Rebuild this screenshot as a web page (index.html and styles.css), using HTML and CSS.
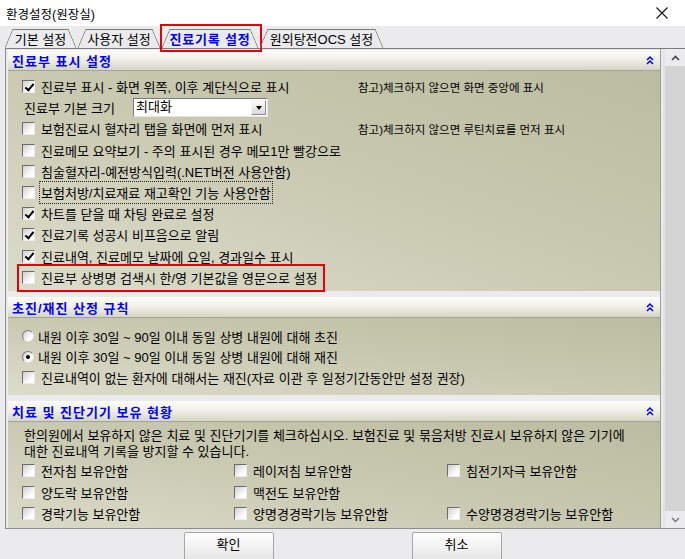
FILE: index.html
```html
<!DOCTYPE html>
<html lang="ko">
<head>
    <meta charset="UTF-8">
    <title>환경설정(원장실)</title>
    <link rel="stylesheet" href="styles.css">
</head>
<body>
<div class="window">
    <div class="titlebar">
        <span class="title">환경설정(원장실)</span>
        <svg class="close" width="12" height="12" viewBox="0 0 12 12"><path d="M0.5 0.5 L11.5 11.5 M11.5 0.5 L0.5 11.5" stroke="#111" stroke-width="1.1"/></svg>
    </div>

    <div class="tabs">
        <div class="tab t1">기본 설정</div>
        <div class="tab t2">사용자 설정</div>
        <div class="tab t3 active">진료기록 설정</div>
        <div class="tab t4">원외탕전OCS 설정</div>
    </div>

    <div class="panel">
        <div class="sections">
            <!-- 진료부 표시 설정 -->
            <div class="sec-head">
                <span>진료부 표시 설정</span>
                <svg width="8" height="10" viewBox="0 0 8 10"><path d="M1 5 L4 2 L7 5 M1 9 L4 6 L7 9" stroke="#0000ff" stroke-width="1.5" fill="none"/></svg>
            </div>
            <div class="sec-body s1">
                <div class="row"><span class="cb on"></span><span class="main">진료부 표시 - 화면 위쪽, 이후 계단식으로 표시</span><span class="note">참고)체크하지 않으면 화면 중앙에 표시</span></div>
                <div class="row size-row">
                    <span class="size-label">진료부 기본 크기</span>
                    <div class="select"><span class="val">최대화</span><span class="arrow"><i></i></span></div>
                </div>
                <div class="row"><span class="cb"></span><span class="main">보험진료시 혈자리 탭을 화면에 먼저 표시</span><span class="note">참고)체크하지 않으면 루틴치료를 먼저 표시</span></div>
                <div class="row"><span class="cb"></span><span>진료메모 요약보기 - 주의 표시된 경우 메모1만 빨강으로</span></div>
                <div class="row"><span class="cb"></span><span>침술혈자리-예전방식입력(.NET버전 사용안함)</span></div>
                <div class="row"><span class="cb"></span><span class="focus">보험처방/치료재료 재고확인 기능 사용안함</span></div>
                <div class="row"><span class="cb on"></span><span>차트를 닫을 때 차팅 완료로 설정</span></div>
                <div class="row"><span class="cb on"></span><span>진료기록 성공시 비프음으로 알림</span></div>
                <div class="row"><span class="cb on"></span><span>진료내역, 진료메모 날짜에 요일, 경과일수 표시</span></div>
                <div class="row"><span class="marked"><span class="cb"></span><span>진료부 상병명 검색시 한/영 기본값을 영문으로 설정</span></span></div>
            </div>

            <!-- 초진/재진 -->
            <div class="sec-head">
                <span>초진/재진 산정 규칙</span>
                <svg width="8" height="10" viewBox="0 0 8 10"><path d="M1 5 L4 2 L7 5 M1 9 L4 6 L7 9" stroke="#0000ff" stroke-width="1.5" fill="none"/></svg>
            </div>
            <div class="sec-body s2">
                <div class="row radio-row"><span class="rb"></span><span>내원 이후 30일 ~ 90일 이내 동일 상병 내원에 대해 초진</span></div>
                <div class="row radio-row"><span class="rb on"></span><span>내원 이후 30일 ~ 90일 이내 동일 상병 내원에 대해 재진</span></div>
                <div class="row"><span class="cb"></span><span>진료내역이 없는 환자에 대해서는 재진(자료 이관 후 일정기간동안만 설정 권장)</span></div>
            </div>

            <!-- 치료 및 진단기기 -->
            <div class="sec-head">
                <span>치료 및 진단기기 보유 현황</span>
                <svg width="8" height="10" viewBox="0 0 8 10"><path d="M1 5 L4 2 L7 5 M1 9 L4 6 L7 9" stroke="#0000ff" stroke-width="1.5" fill="none"/></svg>
            </div>
            <div class="sec-body s3">
                <p class="desc">한의원에서 보유하지 않은 치료 및 진단기기를 체크하십시오. 보험진료 및 묶음처방 진료시 보유하지 않은 기기에<br>대한 진료내역 기록을 방지할 수 있습니다.</p>
                <div class="devices">
                    <div class="row"><span class="cb"></span><span>전자침 보유안함</span></div>
                    <div class="row"><span class="cb"></span><span>레이저침 보유안함</span></div>
                    <div class="row"><span class="cb"></span><span>침전기자극 보유안함</span></div>
                    <div class="row"><span class="cb"></span><span>양도락 보유안함</span></div>
                    <div class="row"><span class="cb"></span><span>맥전도 보유안함</span></div>
                    <div class="row"></div>
                    <div class="row"><span class="cb"></span><span>경락기능 보유안함</span></div>
                    <div class="row"><span class="cb"></span><span>양명경경락기능 보유안함</span></div>
                    <div class="row"><span class="cb"></span><span>수양명경경락기능 보유안함</span></div>
                </div>
            </div>
        </div>
        <div class="scrollbar">
            <div class="sb-btn"><svg width="9" height="6" viewBox="0 0 9 6"><path d="M1 5 L4.5 1.5 L8 5" stroke="#444" stroke-width="1.6" fill="none"/></svg></div>
            <div class="sb-track"></div>
            <div class="sb-btn"><svg width="9" height="6" viewBox="0 0 9 6"><path d="M1 1 L4.5 4.5 L8 1" stroke="#777" stroke-width="1.4" fill="none"/></svg></div>
        </div>
    </div>

    <div class="footer">
        <button class="btn">확인</button>
        <button class="btn">취소</button>
    </div>
</div>
</body>
</html>
```

FILE: styles.css
```css
* {
    box-sizing: border-box;
}

body {
    margin: 0;
    font-family: "Liberation Sans", "Noto Sans CJK KR", sans-serif;
    font-size: 13px;
    color: #000;
    background: #ebebee;
}

.window {
    width: 685px;
    height: 559px;
    overflow: hidden;
    display: flex;
    flex-direction: column;
}

.titlebar {
    height: 26px;
    flex: none;
    background: #fff;
    display: flex;
    align-items: center;
    justify-content: space-between;
    padding: 0 17px 0 6px;
}

.title {
    font-size: 12.5px;
}

.tabs {
    height: 22px;
    flex: none;
    display: flex;
    gap: 2px;
    padding: 3px 0 0 5px;
}

.tab {
    height: 19px;
    display: flex;
    align-items: center;
    justify-content: center;
    position: relative;
    background:
        linear-gradient(#7c7c7c, #7c7c7c) 8px 0 / calc(100% - 16px) 1px no-repeat,
        linear-gradient(to bottom right, transparent calc(50% - 0.7px), #7c7c7c 50%, transparent calc(50% + 0.7px)) 0 0 / 8px 100% no-repeat,
        linear-gradient(to top right, transparent calc(50% - 0.7px), #7c7c7c 50%, transparent calc(50% + 0.7px)) 100% 0 / 8px 100% no-repeat;
}

.t1 { width: 71px; }
.t2 { width: 82px; }
.t3 { width: 96px; }
.t4 { width: 123px; }

.tab.active {
    color: #0000ff;
    font-weight: bold;
    letter-spacing: 0.8px;
}

/* 빨간 표시 박스 */
.tab.active::after {
    content: "";
    position: absolute;
    top: -5px;
    bottom: -4px;
    left: -2px;
    right: -4px;
    border: 2px solid #e4000f;
}

.panel {
    height: 481px;
    flex: none;
    display: flex;
    margin-left: 5px;
    border-top: 1px solid #7c7c7c;
    border-left: 1px solid #8c8c8c;
    border-bottom: 1px solid #8c8c8c;
}

.sections {
    width: 655px;
    padding: 1px 0 0 2px;
    overflow: hidden;
    border-right: 1px solid #9c9c9c;
}

.sec-head {
    height: 21px;
    display: flex;
    align-items: center;
    justify-content: space-between;
    padding: 0 6px 0 4px;
    border-bottom: 1px solid #a4a496;
    background: linear-gradient(#fdfdf9, #f1f1e9 45%, #d6d6c5);
    color: #0000ff;
    font-size: 13px;
    font-weight: bold;
    letter-spacing: 1px;
}

.sec-body {
    background: linear-gradient(to bottom left, #bcbca1 0%, #c8c8b0 45%, #dcdccb 100%);
    margin-bottom: 6px;
}

.s1 {
    height: 220px;
    padding-top: 5px;
}

.s2 {
    height: 77px;
    padding-top: 8px;
}

.s3 {
    height: 120px;
    margin-bottom: 0;
}

.row {
    height: 21.2px;
    display: flex;
    align-items: center;
    padding-left: 14px;
    white-space: nowrap;
}

.s2 .row {
    height: 20.5px;
}

.main {
    width: 317px;
}

.note {
    font-size: 11.5px;
}

.size-row {
    padding-left: 16px;
}

.size-label {
    width: 109px;
}

.select {
    width: 135px;
    height: 19px;
    display: flex;
    background: #fff;
    border: 1px solid;
    border-color: #7a7a7a #e6e6e6 #e6e6e6 #7a7a7a;
}

.select .val {
    flex: 1;
    padding-left: 2px;
    line-height: 16px;
}

.select .arrow {
    width: 15px;
    margin: 1px;
    display: flex;
    align-items: center;
    justify-content: center;
    background: linear-gradient(#fbfbfb, #dadada);
    border: 1px solid;
    border-color: #f4f4f4 #8a8a8a #8a8a8a #f4f4f4;
}

.select .arrow i {
    width: 0;
    height: 0;
    border-left: 3.5px solid transparent;
    border-right: 3.5px solid transparent;
    border-top: 4px solid #000;
}

.cb {
    width: 13px;
    height: 13px;
    flex: none;
    position: relative;
    margin-right: 6px;
    border: 1px solid;
    border-color: #6c6c6c #ececec #ececec #6c6c6c;
    background: linear-gradient(135deg, #cfcfcf, #ffffff 75%);
}

.cb.on::after {
    content: "";
    position: absolute;
    left: 3.5px;
    top: 0.5px;
    width: 3px;
    height: 7px;
    border: solid #000;
    border-width: 0 2px 2px 0;
    transform: rotate(40deg);
}

.radio-row .rb {
    width: 12px;
    height: 12px;
    flex: none;
    margin-right: 4px;
    border-radius: 50%;
    border: 1px solid;
    border-color: #7a7a7a #e4e4e4 #e4e4e4 #7a7a7a;
    background: linear-gradient(135deg, #d2d2d2, #ffffff 75%);
    display: flex;
    align-items: center;
    justify-content: center;
}

.rb.on::after {
    content: "";
    width: 4px;
    height: 4px;
    border-radius: 50%;
    background: #000;
}

.focus {
    outline: 1px dotted #222;
    outline-offset: 1px;
}

.marked {
    height: 100%;
    display: flex;
    align-items: center;
    position: relative;
}

.marked::after {
    content: "";
    position: absolute;
    top: -3px;
    bottom: -4px;
    left: -5px;
    right: -8px;
    border: 2px solid #e4000f;
}

.desc {
    margin: 0;
    padding: 6px 0 0 16px;
    line-height: 16px;
}

.devices {
    display: grid;
    grid-template-columns: 226px 213px 1fr;
}

.devices .row {
    height: 21.5px;
    padding-left: 14px;
}

.devices .row:nth-child(3n+2),
.devices .row:nth-child(3n) {
    padding-left: 0;
}

.scrollbar {
    width: 22px;
    margin-left: 2px;
    display: flex;
    flex-direction: column;
    background: #d4d4d4;
    border-left: 2px solid #e4e4e4;
}

.sb-btn {
    height: 17px;
    display: flex;
    align-items: center;
    justify-content: center;
    background: #ececf0;
}

.sb-track {
    flex: 1;
}

.footer {
    flex: 1;
    display: flex;
    justify-content: center;
    gap: 138px;
    padding-top: 3px;
}

.btn {
    width: 90px;
    height: 32px;
    padding: 0 0 9px;
    font-family: "Liberation Sans", "Noto Sans CJK KR", sans-serif;
    font-size: 13px;
    color: #000;
    border: 1px solid #a6a6a6;
    border-radius: 2px;
    background: linear-gradient(#fefefe, #e4e4e4);
}
```
